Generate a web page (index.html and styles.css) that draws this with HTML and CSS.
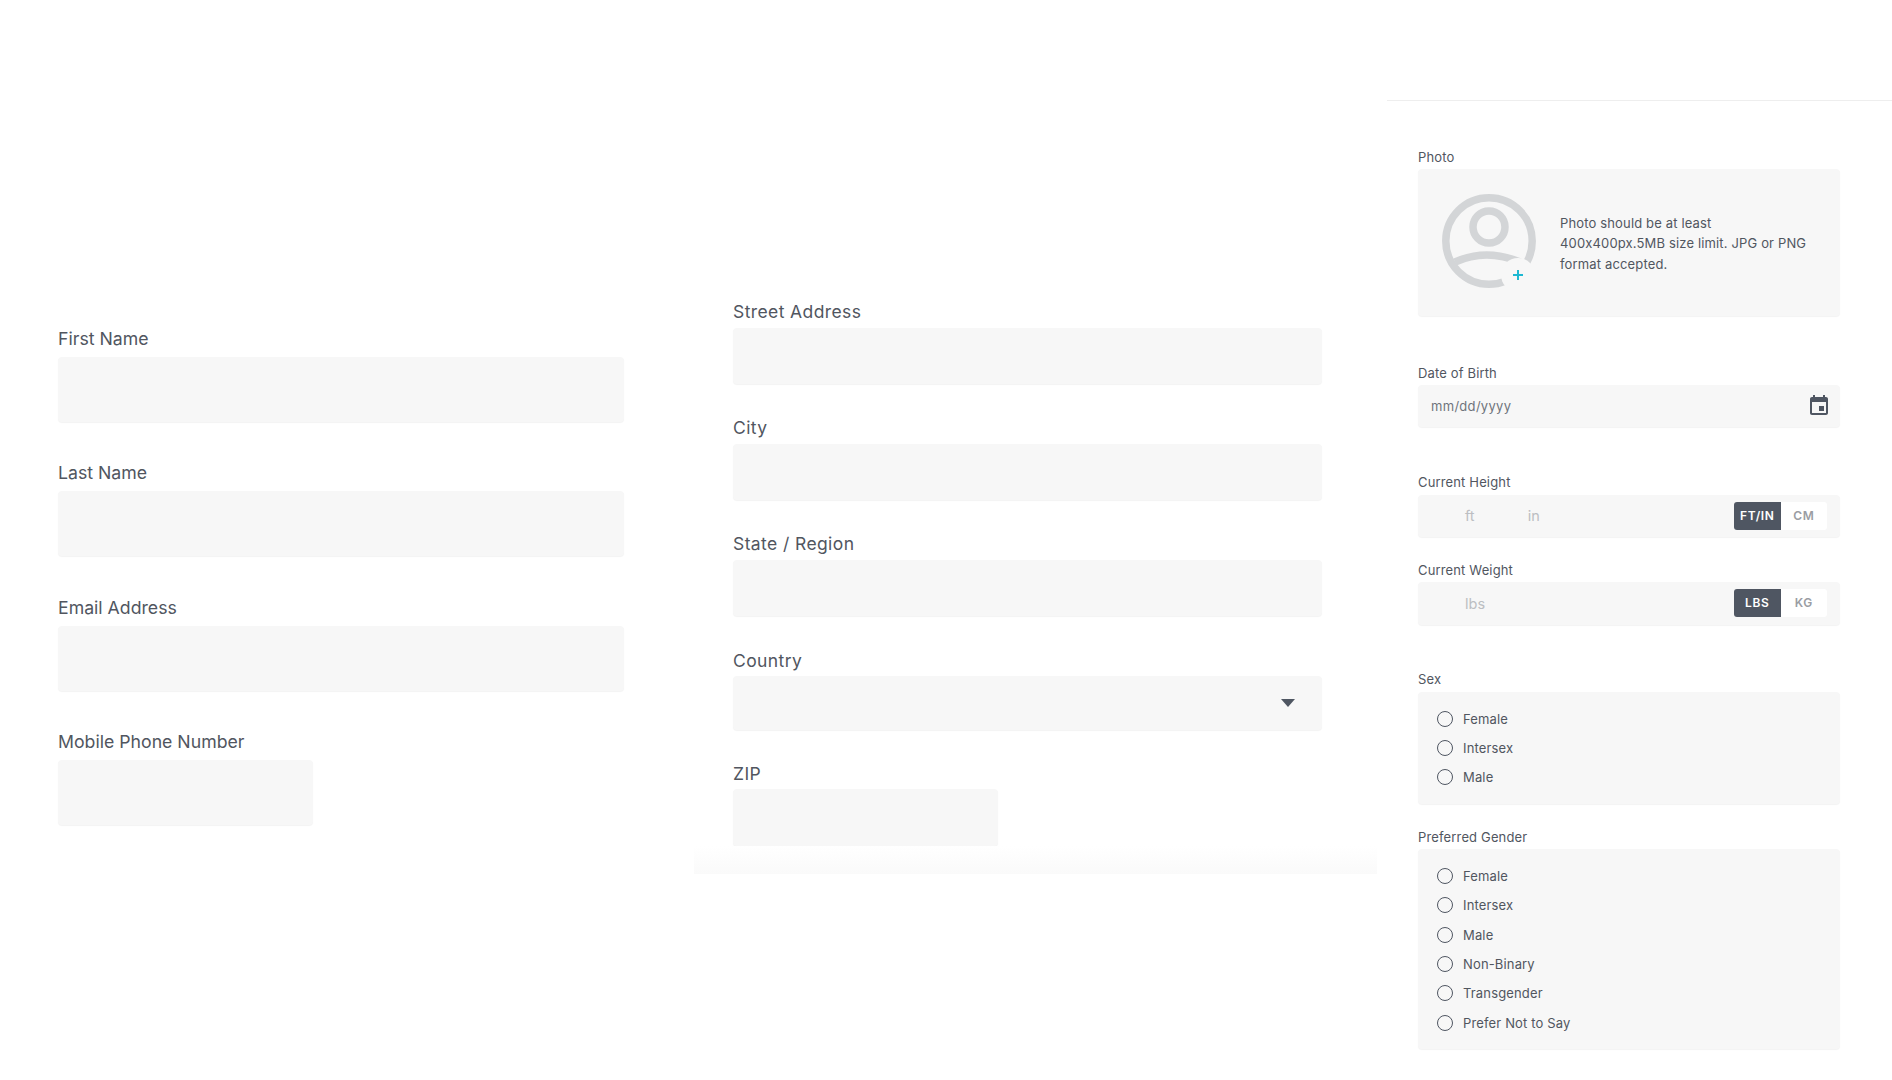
FILE: index.html
```html
<!DOCTYPE html>
<html lang="en">
<head>
  <meta charset="UTF-8" />
  <meta name="viewport" content="width=device-width, initial-scale=1.0" />
  <title>Patient Profile</title>
  <link rel="stylesheet" href="styles.css">
</head>
<body>
  <div class="page">
    <section class="col col-name">
      <div class="field">
        <label class="label">First Name</label>
        <input class="input" type="text" />
      </div>
      <div class="field">
        <label class="label">Last Name</label>
        <input class="input" type="text" />
      </div>
      <div class="field">
        <label class="label">Email Address</label>
        <input class="input" type="text" />
      </div>
      <div class="field">
        <label class="label">Mobile Phone Number</label>
        <input class="input input-phone" type="text" />
      </div>
    </section>

    <section class="col col-address">
      <div class="field">
        <label class="label">Street Address</label>
        <input class="input" type="text" />
      </div>
      <div class="field">
        <label class="label">City</label>
        <input class="input" type="text" />
      </div>
      <div class="field">
        <label class="label">State / Region</label>
        <input class="input" type="text" />
      </div>
      <div class="field">
        <label class="label">Country</label>
        <div class="select"><span class="caret"></span></div>
      </div>
      <div class="field">
        <label class="label">ZIP</label>
        <input class="input input-zip" type="text" />
      </div>
      <div class="fade"></div>
    </section>

    <aside class="col col-details">
      <div class="details-head"></div>
      <div class="details-body">
        <label class="small-label">Photo</label>
        <div class="box photo-box">
          <svg class="avatar" width="94" height="94" viewBox="0 0 94 94">
            <g fill="none" stroke="#d3d5d7" stroke-width="7.5">
              <circle cx="47" cy="47" r="43.2" />
              <circle cx="47" cy="33" r="16" />
              <path d="M13 68Q44 54 78 68" />
            </g>
            <circle cx="76" cy="81" r="17" fill="#f7f7f7" />
            <path d="M76 76v10M71 81h10" stroke="#1db8d2" stroke-width="2" />
          </svg>
          <p class="photo-text">Photo should be at least<br>400x400px.5MB size limit. JPG or PNG<br>format accepted.</p>
        </div>

        <label class="small-label label-birth">Date of Birth</label>
        <div class="box date-box">
          <span class="date-text">mm/dd/yyyy</span>
          <svg width="24" height="24" viewBox="0 0 24 24" fill="#4f5662">
            <path d="M17 12h-5v5h5v-5zM16 1v2H8V1H6v2H5c-1.11 0-1.99.9-1.99 2L3 19c0 1.1.89 2 2 2h14c1.1 0 2-.9 2-2V5c0-1.1-.9-2-2-2h-1V1h-2zm3 18H5V8h14v11z" />
          </svg>
        </div>

        <label class="small-label label-height">Current Height</label>
        <div class="box measure-box">
          <span class="unit unit-ft">ft</span>
          <span class="unit unit-in">in</span>
          <div class="toggle">
            <span class="toggle-item active">FT/IN</span>
            <span class="toggle-item">CM</span>
          </div>
        </div>

        <label class="small-label label-weight">Current Weight</label>
        <div class="box measure-box">
          <span class="unit unit-ft">lbs</span>
          <div class="toggle">
            <span class="toggle-item active">LBS</span>
            <span class="toggle-item">KG</span>
          </div>
        </div>

        <label class="small-label label-sex">Sex</label>
        <div class="box radio-box">
          <label class="radio"><input type="radio" name="sex" />Female</label>
          <label class="radio"><input type="radio" name="sex" />Intersex</label>
          <label class="radio"><input type="radio" name="sex" />Male</label>
        </div>

        <label class="small-label label-gender">Preferred Gender</label>
        <div class="box radio-box">
          <label class="radio"><input type="radio" name="gender" />Female</label>
          <label class="radio"><input type="radio" name="gender" />Intersex</label>
          <label class="radio"><input type="radio" name="gender" />Male</label>
          <label class="radio"><input type="radio" name="gender" />Non-Binary</label>
          <label class="radio"><input type="radio" name="gender" />Transgender</label>
          <label class="radio"><input type="radio" name="gender" />Prefer Not to Say</label>
        </div>
      </div>
    </aside>
  </div>
</body>
</html>
```

FILE: styles.css
```css
* {
  box-sizing: border-box;
}
body {
  margin: 0;
  background: #fff;
  color: #51565f;
  font-family: Inter, 'Noto Sans', sans-serif;
  font-feature-settings: "calt" 0;
}
.page {
  display: flex;
  align-items: flex-start;
  height: 1080px;
  overflow: hidden;
}
.col-name {
  display: flex;
  flex-direction: column;
  gap: 40.3px;
  width: 694px;
  padding: 328px 70px 0 58px;
}
.col-address {
  display: flex;
  flex-direction: column;
  gap: 33.2px;
  width: 683px;
  padding: 301px 55px 0 39px;
}
.col-details {
  width: 505px;
  margin-left: 10px;
}
.field {
  display: flex;
  flex-direction: column;
  align-items: flex-start;
}
.label {
  font-size: 17.7px;
  line-height: 22px;
  margin-bottom: 7px;
}
.col-address .label {
  margin-bottom: 4.5px;
  font-size: 17.5px;
  letter-spacing: 0.4px;
}
.input {
  display: block;
  width: 100%;
  height: 65px;
  border: none;
  border-radius: 4px;
  background: #f7f7f7;
  box-shadow: 0 1px 1px #f3f3f3;
}
.col-address .input {
  height: 56.5px;
}
.input-phone {
  width: 255px;
}
.col-address .input-zip {
  width: 265px;
}
.select {
  display: flex;
  align-items: center;
  justify-content: flex-end;
  width: 100%;
  height: 53.5px;
  padding-right: 27px;
  border-radius: 4px;
  background: #f7f7f7;
  box-shadow: 0 1px 1px #f3f3f3;
}
.caret {
  width: 0;
  height: 0;
  border-left: 7px solid transparent;
  border-right: 7px solid transparent;
  border-top: 8px solid #4f5662;
}
.fade {
  height: 28px;
  margin: -33.2px -55px 0 -39px;
  background: linear-gradient(#fff, #fafafa);
}
.details-head {
  height: 101px;
  border-bottom: 1px solid #eeeeee;
}
.details-body {
  padding: 47.5px 52px 0 31px;
}
.small-label {
  display: block;
  font-size: 13px;
  line-height: 16px;
  margin-bottom: 4.5px;
  letter-spacing: 0.15px;
}
.label-birth {
  margin-top: 48.5px;
}
.label-height {
  margin-top: 47.5px;
}
.label-weight {
  margin-top: 24.5px;
}
.label-sex {
  margin-top: 46.5px;
}
.label-gender {
  margin-top: 25.5px;
  margin-bottom: 3.5px;
}
.box {
  border-radius: 4px;
  background: #f7f7f7;
  box-shadow: 0 1px 1px #f3f3f3;
}
.photo-box {
  display: flex;
  align-items: center;
  gap: 24px;
  height: 147px;
  padding-left: 24px;
}
.avatar {
  margin-top: -4px;
}
.photo-text {
  margin: 2px 0 0;
  font-size: 13px;
  line-height: 20.6px;
  letter-spacing: 0.15px;
}
.date-box {
  display: flex;
  align-items: center;
  justify-content: space-between;
  height: 41.5px;
  padding: 0 9px 0 13px;
}
.date-text {
  font-size: 13px;
  letter-spacing: 0.3px;
  color: #6f747c;
}
.measure-box {
  display: flex;
  align-items: center;
  height: 42.5px;
  padding: 0 13px 0 47px;
}
.unit {
  font-size: 14.5px;
  color: #bcbec2;
}
.unit-in {
  margin-left: 53px;
}
.toggle {
  display: flex;
  margin-left: auto;
  border-radius: 3px;
  background: #fff;
}
.toggle-item {
  width: 46.5px;
  height: 28px;
  font-size: 12px;
  font-weight: 600;
  line-height: 28px;
  text-align: center;
  letter-spacing: 0.6px;
  color: #9a9da3;
}
.toggle-item.active {
  border-radius: 3px 0 0 3px;
  background: #4f5662;
  color: #fff;
}
.radio-box {
  display: flex;
  flex-direction: column;
  gap: 13.4px;
  padding: 19px 19px 18.5px;
}
.radio {
  display: flex;
  align-items: center;
  gap: 10px;
  height: 16px;
  font-size: 13px;
  letter-spacing: 0.15px;
}
.radio input {
  appearance: none;
  width: 16px;
  height: 16px;
  margin: 0;
  border: 1.7px solid #4f5662;
  border-radius: 50%;
  background: transparent;
}
```
